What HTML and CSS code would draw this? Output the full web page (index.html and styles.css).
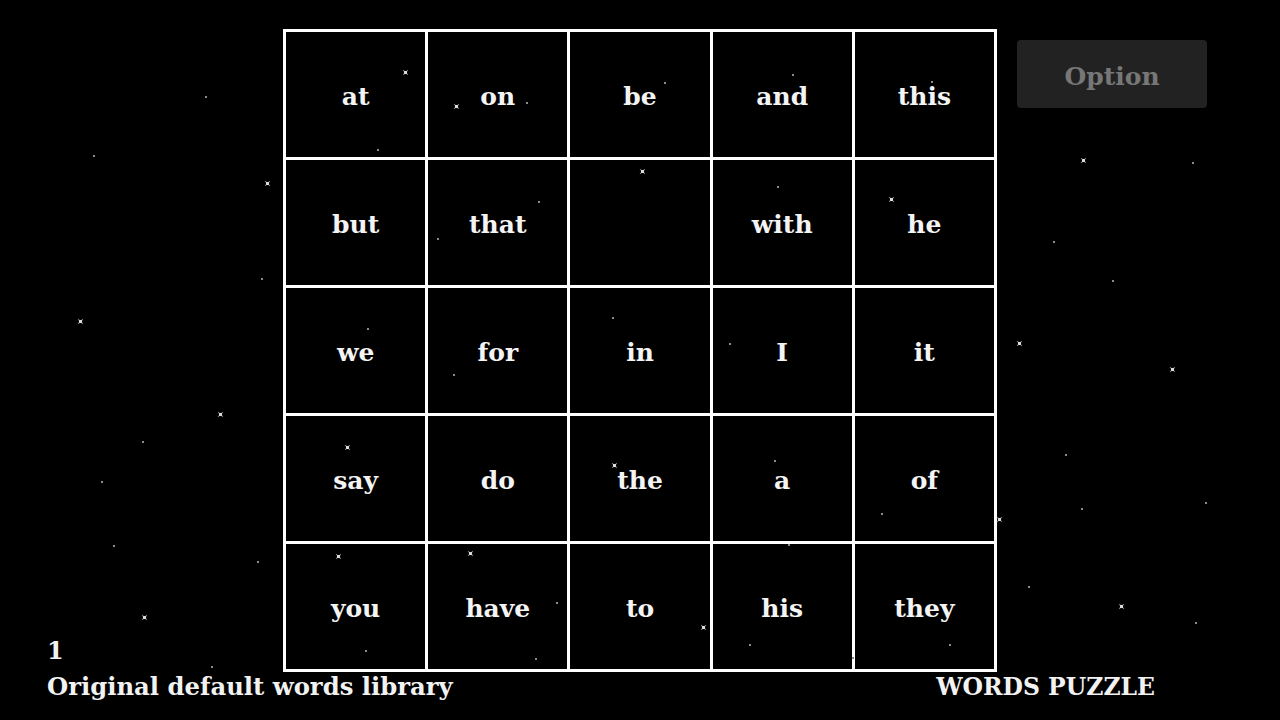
FILE: index.html
```html
<!DOCTYPE html>
<html lang="en">
<head>
<meta charset="utf-8">
<title>Words Puzzle</title>
<link rel="stylesheet" href="styles.css">
</head>
<body>
<div class="stage">
  <div class="sky">
    <span class="star big" style="left:405px;top:72px"></span>
    <span class="star big" style="left:456px;top:106px"></span>
    <span class="star" style="left:527px;top:103px"></span>
    <span class="star" style="left:665px;top:83px"></span>
    <span class="star" style="left:793px;top:75px"></span>
    <span class="star" style="left:932px;top:82px"></span>
    <span class="star" style="left:206px;top:97px"></span>
    <span class="star" style="left:94px;top:156px"></span>
    <span class="star" style="left:378px;top:150px"></span>
    <span class="star big" style="left:267px;top:183px"></span>
    <span class="star big" style="left:642px;top:171px"></span>
    <span class="star" style="left:539px;top:202px"></span>
    <span class="star" style="left:778px;top:187px"></span>
    <span class="star big" style="left:891px;top:199px"></span>
    <span class="star big" style="left:1083px;top:160px"></span>
    <span class="star" style="left:1193px;top:163px"></span>
    <span class="star" style="left:1054px;top:242px"></span>
    <span class="star" style="left:438px;top:239px"></span>
    <span class="star" style="left:262px;top:279px"></span>
    <span class="star" style="left:1113px;top:281px"></span>
    <span class="star big" style="left:80px;top:321px"></span>
    <span class="star" style="left:368px;top:329px"></span>
    <span class="star" style="left:613px;top:318px"></span>
    <span class="star" style="left:730px;top:344px"></span>
    <span class="star big" style="left:1019px;top:343px"></span>
    <span class="star big" style="left:1172px;top:369px"></span>
    <span class="star" style="left:454px;top:375px"></span>
    <span class="star big" style="left:220px;top:414px"></span>
    <span class="star" style="left:143px;top:442px"></span>
    <span class="star big" style="left:347px;top:447px"></span>
    <span class="star" style="left:775px;top:461px"></span>
    <span class="star" style="left:1066px;top:455px"></span>
    <span class="star big" style="left:614px;top:465px"></span>
    <span class="star" style="left:102px;top:482px"></span>
    <span class="star" style="left:882px;top:514px"></span>
    <span class="star big" style="left:999px;top:519px"></span>
    <span class="star" style="left:1206px;top:503px"></span>
    <span class="star" style="left:1082px;top:509px"></span>
    <span class="star" style="left:114px;top:546px"></span>
    <span class="star big" style="left:338px;top:556px"></span>
    <span class="star big" style="left:470px;top:553px"></span>
    <span class="star" style="left:789px;top:545px"></span>
    <span class="star" style="left:258px;top:562px"></span>
    <span class="star" style="left:1029px;top:587px"></span>
    <span class="star big" style="left:1121px;top:606px"></span>
    <span class="star big" style="left:144px;top:617px"></span>
    <span class="star big" style="left:703px;top:627px"></span>
    <span class="star" style="left:557px;top:603px"></span>
    <span class="star" style="left:1196px;top:623px"></span>
    <span class="star" style="left:536px;top:659px"></span>
    <span class="star" style="left:366px;top:651px"></span>
    <span class="star" style="left:853px;top:658px"></span>
    <span class="star" style="left:212px;top:667px"></span>
    <span class="star" style="left:950px;top:645px"></span>
    <span class="star" style="left:750px;top:645px"></span>
  </div>

  <aside class="side side-left">
    <div class="level">1</div>
    <div class="library">Original default words library</div>
  </aside>

  <main class="board">
    <div class="cell">at</div>
    <div class="cell">on</div>
    <div class="cell">be</div>
    <div class="cell">and</div>
    <div class="cell">this</div>
    <div class="cell">but</div>
    <div class="cell">that</div>
    <div class="cell"></div>
    <div class="cell">with</div>
    <div class="cell">he</div>
    <div class="cell">we</div>
    <div class="cell">for</div>
    <div class="cell">in</div>
    <div class="cell">I</div>
    <div class="cell">it</div>
    <div class="cell">say</div>
    <div class="cell">do</div>
    <div class="cell">the</div>
    <div class="cell">a</div>
    <div class="cell">of</div>
    <div class="cell">you</div>
    <div class="cell">have</div>
    <div class="cell">to</div>
    <div class="cell">his</div>
    <div class="cell">they</div>
  </main>

  <aside class="side side-right">
    <button class="option-btn">Option</button>
    <div class="title">WORDS PUZZLE</div>
  </aside>
</div>
</body>
</html>
```

FILE: styles.css
```css
html, body {
  margin: 0;
  padding: 0;
  background: #000;
}

body {
  width: 1280px;
  height: 720px;
  overflow: hidden;
  font-family: "DejaVu Serif", "Liberation Serif", serif;
  font-weight: bold;
  color: #f2f2f2;
}

.stage {
  position: relative;
  width: 1280px;
  height: 720px;
  display: grid;
  grid-template-columns: 283px 714px 283px;
}

.sky {
  position: absolute;
  inset: 0;
  pointer-events: none;
  z-index: 2;
}

.star {
  position: absolute;
  width: 2px;
  height: 2px;
  margin: -1px 0 0 -1px;
  background: #8a8a8a;
}

.star.big {
  width: 3px;
  height: 3px;
  margin: -1px 0 0 -1px;
  background: #eee;
}

.star.big::before,
.star.big::after {
  content: "";
  position: absolute;
  left: -2px;
  top: 1px;
  width: 7px;
  height: 1px;
  background: rgba(200, 200, 200, 0.6);
  transform: rotate(45deg);
}

.star.big::after {
  transform: rotate(-45deg);
}

.side {
  display: flex;
  flex-direction: column;
  white-space: nowrap;
  position: relative;
  z-index: 3;
}

.side-left {
  justify-content: flex-end;
  padding: 0 0 19px 47px;
}

.level {
  font-size: 24px;
  line-height: 28px;
  margin-bottom: 8px;
}

.library {
  font-size: 24.3px;
  line-height: 28px;
}

.board {
  margin-top: 29px;
  width: 714px;
  height: 643px;
  box-sizing: border-box;
  padding: 3px;
  gap: 3px;
  background: #fff;
  display: grid;
  grid-template-columns: repeat(5, 1fr);
  grid-template-rows: repeat(5, 1fr);
}

.cell {
  background: #000;
  display: flex;
  align-items: center;
  justify-content: center;
  padding-top: 4px;
  font-size: 25px;
  color: #f4f4f4;
}

.side-right {
  justify-content: space-between;
  align-items: flex-end;
  padding: 40px 125px 19px 20px;
}

.option-btn {
  align-self: flex-start;
  width: 190px;
  height: 68px;
  border: none;
  border-radius: 4px;
  background: #222;
  color: #777;
  font-family: inherit;
  font-weight: bold;
  font-size: 25px;
  padding: 4px 0 0;
}

.title {
  font-size: 23.5px;
  line-height: 28px;
  text-align: right;
}
```
